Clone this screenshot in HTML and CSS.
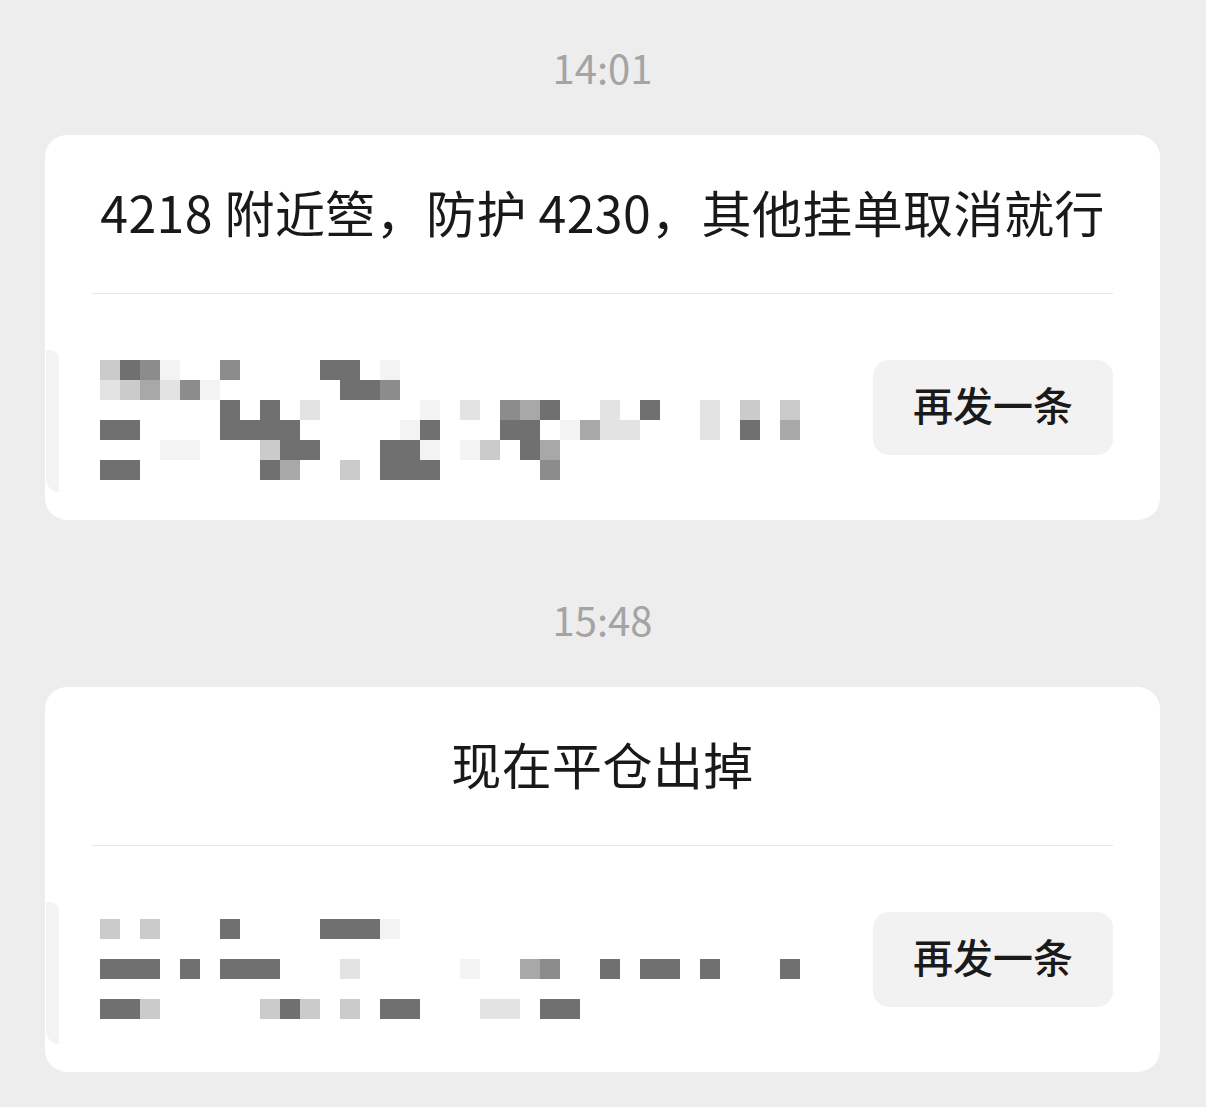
FILE: index.html
```html
<!DOCTYPE html>
<html lang="zh-CN">

<head>
    <meta charset="UTF-8">
    <meta name="viewport" content="width=device-width, initial-scale=1.0">
    <title>消息</title>
    <link rel="stylesheet" href="styles.css">
</head>

<body>

    <div class="chat">
        <div class="time">14:01</div>
        <div class="card">
            <div class="card-text">4218 附近箜，防护 4230，其他挂单取消就行</div>
            <div class="card-foot">
                <!-- Prévia do remetente, pixelada -->
                <div class="mosaic mosaic-top" data-map="ldmf..m....dd.f.....................|vlgvmf......ddm.....................|......d.d.v.....f.v.mgd..v.d..v.l.l.|dd....dddd.....fd...dd.fgvv...v.d.g.|...ff...ldd...ddf.fl.dg.............|dd......dg..l.ddd.....m............."></div>
                <button class="resend">再发一条</button>
            </div>
        </div>

        <div class="time">15:48</div>
        <div class="card">
            <div class="card-text">现在平仓出掉</div>
            <div class="card-foot">
                <div class="mosaic mosaic-low" data-map="l.l...d....dddf.....................|....................................|ddd.d.ddd...v.....f..gm..d.dd.d...d.|....................................|ddl.....ldl.l.dd...vv.dd............"></div>
                <button class="resend">再发一条</button>
            </div>
        </div>
    </div>

    <script>
        // Monta os blocos do mosaico a partir do mapa de cada div
        document.querySelectorAll('.mosaic').forEach(function (box) {
            var rows = box.dataset.map.split('|');
            rows.forEach(function (row) {
                for (var i = 0; i < row.length; i++) {
                    var cell = document.createElement('span');
                    cell.className = 'px';
                    if (row[i] !== '.') {
                        cell.className += ' px-' + row[i];
                    }
                    box.appendChild(cell);
                }
            });
        });
    </script>

</body>

</html>
```

FILE: styles.css
```css
body {
    margin: 0;
    padding: 38px 0 0;
    background-color: #ededed;
    font-family: "Noto Sans CJK SC", "Noto Sans", sans-serif;
    color: #191919;
}

.chat {
    width: 1115px;
    margin-left: 45px;
}

.time {
    height: 64px;
    line-height: 58px;
    text-align: center;
    font-size: 40px;
    color: #a4a4a4;
    margin-bottom: 33px;
}

.card {
    background-color: #fff;
    border-radius: 22px;
    margin-bottom: 70px;
    overflow: hidden;
}

.card-text {
    height: 152px;
    padding-bottom: 6px;
    margin: 0 47px;
    border-bottom: 1px solid #e6e6e6;
    display: flex;
    justify-content: center;
    align-items: center;
    font-size: 50px;
    letter-spacing: 0.4px;
}

.card-foot {
    position: relative;
    height: 226px;
    padding: 0 47px 0 55px;
    display: flex;
    justify-content: space-between;
    align-items: center;
}

/* sombra clara do avatar na borda esquerda */
.card-foot::before {
    content: "";
    position: absolute;
    left: 1px;
    top: 56px;
    width: 13px;
    height: 142px;
    background-color: #f3f3f3;
    border-radius: 0 10px 0 14px;
}

.mosaic {
    display: grid;
    grid-template-columns: repeat(36, 20px);
    grid-auto-rows: 20px;
    align-self: flex-start;
}

.mosaic-top {
    margin-top: 66px;
}

.mosaic-low {
    margin-top: 73px;
}

.px-d { background-color: #707070; }
.px-m { background-color: #8c8c8c; }
.px-g { background-color: #a8a8a8; }
.px-l { background-color: #cbcbcb; }
.px-v { background-color: #e3e3e3; }
.px-f { background-color: #f3f3f3; }

.resend {
    width: 240px;
    height: 95px;
    padding: 0 0 6px;
    border: none;
    border-radius: 16px;
    background-color: #f2f2f2;
    color: #1a1a1a;
    font-family: inherit;
    font-size: 40px;
    font-weight: 500;
    cursor: pointer;
}
```
